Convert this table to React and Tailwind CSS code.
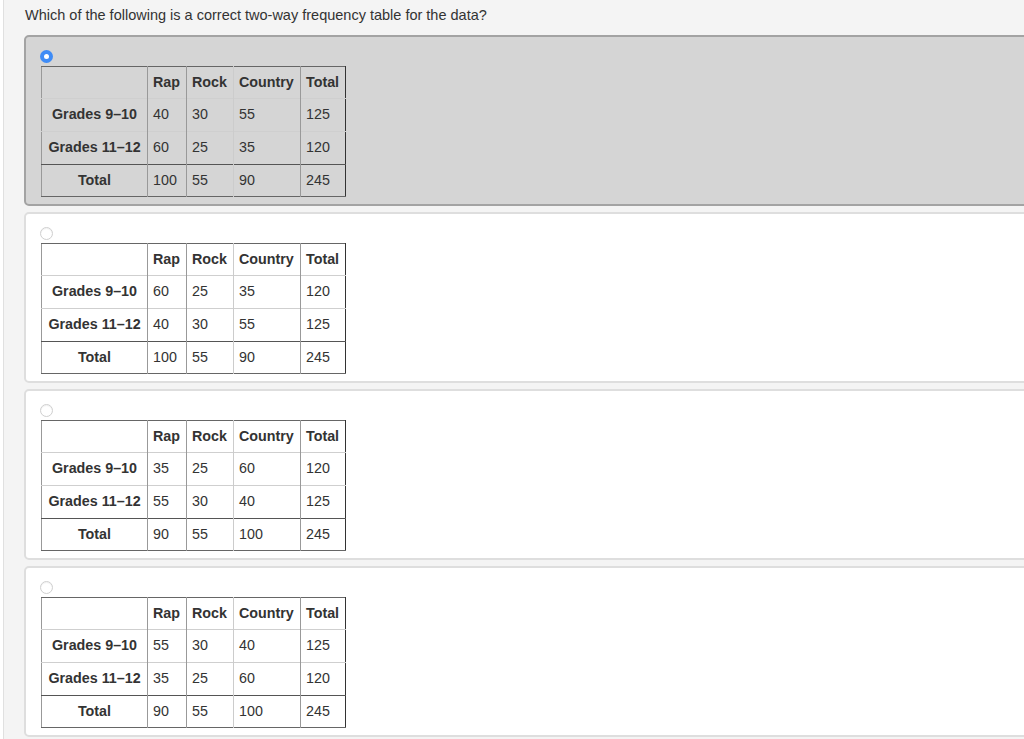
import React from "react";

const options = [
  { selected: true, rows: [["40", "30", "55", "125"], ["60", "25", "35", "120"], ["100", "55", "90", "245"]] },
  { selected: false, rows: [["60", "25", "35", "120"], ["40", "30", "55", "125"], ["100", "55", "90", "245"]] },
  { selected: false, rows: [["35", "25", "60", "120"], ["55", "30", "40", "125"], ["90", "55", "100", "245"]] },
  { selected: false, rows: [["55", "30", "40", "125"], ["35", "25", "60", "120"], ["90", "55", "100", "245"]] },
];

const labels = ["Grades 9–10", "Grades 11–12", "Total"];

function Radio({ selected }) {
  if (selected) {
    return (
      <div className="w-[13px] h-[13px] rounded-full bg-[#3f8cf6] flex items-center justify-center">
        <div className="w-[5px] h-[5px] rounded-full bg-white" />
      </div>
    );
  }
  return <div className="w-[13px] h-[13px] rounded-full bg-white border border-[#cfcfcf] shadow-[inset_0_1px_1px_rgba(0,0,0,0.06)]" />;
}

function FreqTable({ rows }) {
  return (
    <table className="border-collapse table-fixed text-[14.3px] text-[#333] border-t border-t-[#666] border-r border-r-[#333] border-b border-b-[#666] border-l border-l-[#999]">
      <colgroup>
        <col className="w-[106px]" />
        <col className="w-[39px]" />
        <col className="w-[47px]" />
        <col className="w-[67px]" />
        <col className="w-[45px]" />
      </colgroup>
      <thead>
        <tr className="h-[32px] border-b border-b-[#cfcfcf]">
          <th className="border-r border-r-[#999]"></th>
          <th className="text-left font-bold pl-[5px] border-r border-r-[#999]">Rap</th>
          <th className="text-left font-bold pl-[5px] border-r border-r-[#ccc]">Rock</th>
          <th className="text-left font-bold pl-[5px] border-r border-r-[#999]">Country</th>
          <th className="text-left font-bold pl-[5px]">Total</th>
        </tr>
      </thead>
      <tbody>
        {rows.map((r, i) => (
          <tr
            key={i}
            className={
              i === 0
                ? "h-[33px] border-b border-b-[#cfcfcf]"
                : i === 1
                ? "h-[33px] border-b border-b-[#555]"
                : "h-[32px]"
            }
          >
            <td className="text-center font-bold border-r border-r-[#999] whitespace-nowrap">{labels[i]}</td>
            <td className="pl-[5px] border-r border-r-[#999]">{r[0]}</td>
            <td className="pl-[5px] border-r border-r-[#ccc]">{r[1]}</td>
            <td className="pl-[5px] border-r border-r-[#999]">{r[2]}</td>
            <td className="pl-[5px]">{r[3]}</td>
          </tr>
        ))}
      </tbody>
    </table>
  );
}

export default function App() {
  return (
    <div className="w-[1024px] h-[739px] overflow-hidden bg-white pl-[3px] font-['Liberation_Sans',Arial,sans-serif]">
      <div className="h-full border-l border-[#e0e0e0] bg-[#f4f4f4] pt-[5px]">
        <div className="pl-[21px] text-[14.5px] leading-[20px] text-[#333]">
          Which of the following is a correct two-way frequency table for the data?
        </div>
        <div className="mt-[10px] ml-[20px] mr-[-20px] flex flex-col gap-[6px]">
          {options.map((o, i) => (
            <div
              key={i}
              className={
                o.selected
                  ? "h-[171px] rounded-[5px] border-2 border-[#a3a3a3] bg-[#d5d5d5] pl-[14px] pt-[13px]"
                  : "h-[171px] rounded-[5px] border-2 border-[#dedede] bg-white pl-[14px] pt-[13px]"
              }
            >
              <Radio selected={o.selected} />
              <div className="mt-[3px] ml-[1px]">
                <FreqTable rows={o.rows} />
              </div>
            </div>
          ))}
        </div>
      </div>
    </div>
  );
}
